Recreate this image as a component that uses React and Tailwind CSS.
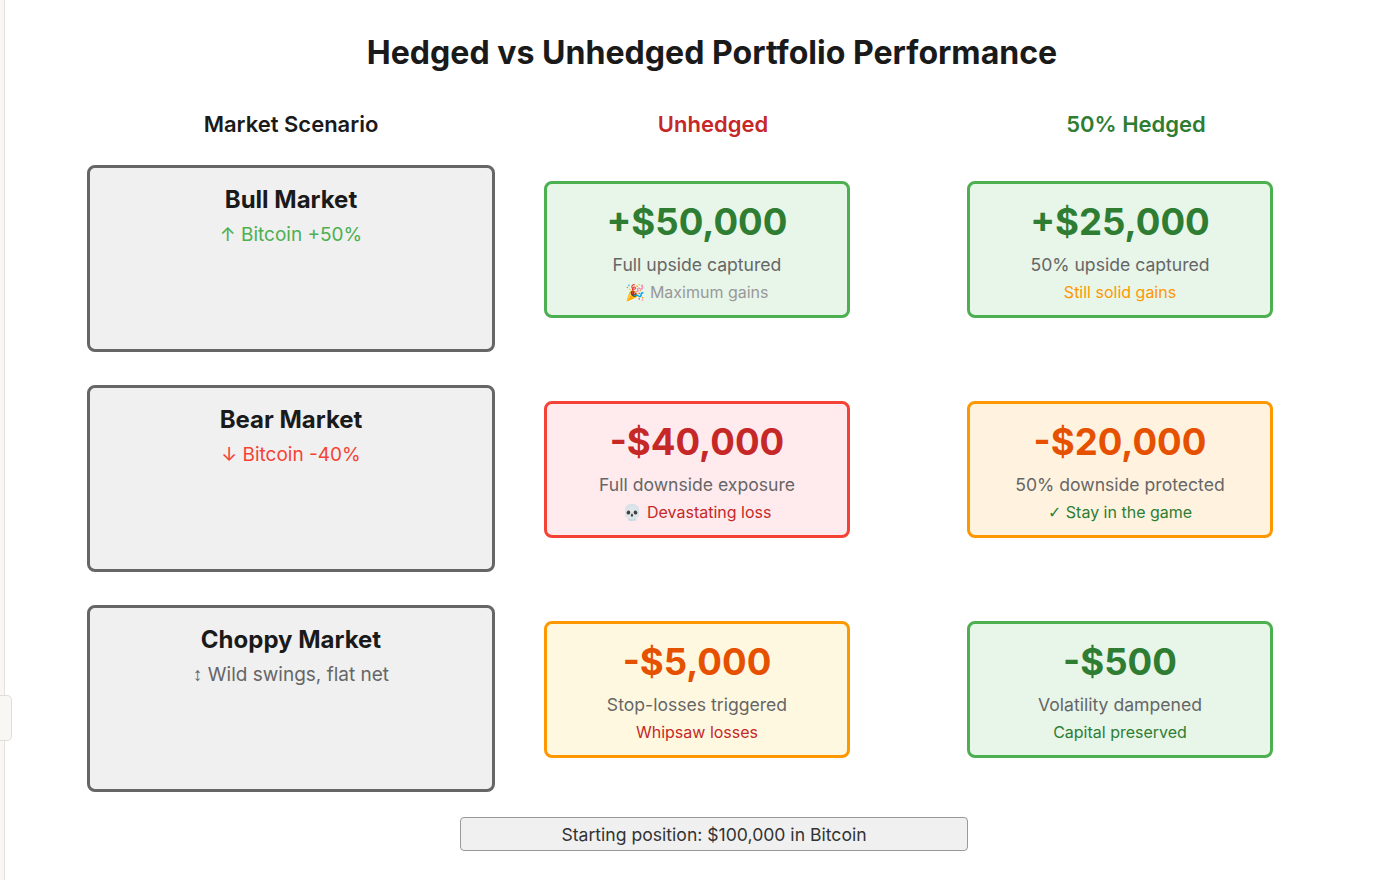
import React from "react";

const Glyph = ({ children, font }) => (
  <span style={{ fontFamily: `${font}, sans-serif` }}>{children}</span>
);

const scenarios = [
  {
    title: "Bull Market",
    move: "↑ Bitcoin +50%",
    moveColor: "text-[#4caf50]",
    unhedged: {
      box: "bg-[#e8f5e9] border-[#4caf50]",
      amount: "+$50,000",
      amountColor: "text-[#2e7d32]",
      line: "Full upside captured",
      note: "🎉 Maximum gains",
      noteColor: "text-[#999999]",
    },
    hedged: {
      box: "bg-[#e8f5e9] border-[#4caf50]",
      amount: "+$25,000",
      amountColor: "text-[#2e7d32]",
      line: "50% upside captured",
      note: "Still solid gains",
      noteColor: "text-[#ff9800]",
    },
  },
  {
    title: "Bear Market",
    move: "↓ Bitcoin -40%",
    moveColor: "text-[#f44336]",
    unhedged: {
      box: "bg-[#ffebee] border-[#f44336]",
      amount: "-$40,000",
      amountColor: "text-[#c62828]",
      line: "Full downside exposure",
      note: "💀 Devastating loss",
      noteColor: "text-[#c62828]",
    },
    hedged: {
      box: "bg-[#fff3e0] border-[#ff9800]",
      amount: "-$20,000",
      amountColor: "text-[#e65100]",
      line: "50% downside protected",
      note: (
        <>
          <Glyph font="'DejaVu Sans'">✓</Glyph> Stay in the game
        </>
      ),
      noteColor: "text-[#2e7d32]",
    },
  },
  {
    title: "Choppy Market",
    move: (
      <>
        <Glyph font="'Liberation Sans'">↕</Glyph> Wild swings, flat net
      </>
    ),
    moveColor: "text-[#666666]",
    unhedged: {
      box: "bg-[#fff8e1] border-[#ff9800]",
      amount: "-$5,000",
      amountColor: "text-[#e65100]",
      line: "Stop-losses triggered",
      note: "Whipsaw losses",
      noteColor: "text-[#c62828]",
    },
    hedged: {
      box: "bg-[#e8f5e9] border-[#4caf50]",
      amount: "-$500",
      amountColor: "text-[#2e7d32]",
      line: "Volatility dampened",
      note: "Capital preserved",
      noteColor: "text-[#2e7d32]",
    },
  },
];

const ResultCard = ({ r }) => (
  <div
    className={`w-[306px] h-[137px] mt-[16px] rounded-[8px] border-[3px] ${r.box} flex flex-col items-center pt-[16px]`}
  >
    <div className={`text-[36.6px] leading-[44px] font-bold ${r.amountColor}`}>{r.amount}</div>
    <div className="mt-[9px] text-[17.6px] leading-[24px] text-[#666666]">{r.line}</div>
    <div className={`mt-[4px] text-[16px] leading-[22px] ${r.noteColor}`}>{r.note}</div>
  </div>
);

export default function App() {
  return (
    <div
      className="relative w-[1382px] h-[880px] bg-white overflow-hidden text-[#1a1a1a]"
      style={{ fontFamily: "Inter, 'Noto Sans', 'Noto Color Emoji', sans-serif" }}
    >
      {/* left app strip */}
      <div className="absolute left-0 top-0 h-full w-[5px] bg-[#f8f7f4] border-r border-[#e4e2dc]" />
      <div className="absolute left-0 top-[695px] w-[12px] h-[46px] bg-[#f8f7f4] border border-l-0 border-[#e0ded8] rounded-r-[5px]" />

      <div className="pl-[87px] pt-[33px]">
        <h1 className="w-[1250px] text-center text-[32.1px] leading-[40px] font-bold">
          Hedged vs Unhedged Portfolio Performance
        </h1>

        <div className="flex mt-[37px] text-[22px] leading-[28px] font-semibold">
          <div className="w-[408px] text-center">Market Scenario</div>
          <div className="w-[306px] ml-[65px] text-center text-[#c62828]">Unhedged</div>
          <div className="w-[306px] ml-[117px] text-center text-[#2e7d32]">50% Hedged</div>
        </div>

        <div className="mt-[27px] flex flex-col gap-[33px]">
          {scenarios.map((s) => (
            <div key={s.title} className="flex items-start">
              <div className="w-[408px] h-[187px] rounded-[8px] border-[3px] border-[#666666] bg-[#f0f0f0] flex flex-col items-center pt-[17px]">
                <div className="text-[24px] leading-[30px] font-bold">{s.title}</div>
                <div className={`mt-[7px] text-[19px] leading-[26px] ${s.moveColor}`}>{s.move}</div>
              </div>
              <div className="ml-[49px]">
                <ResultCard r={s.unhedged} />
              </div>
              <div className="ml-[117px]">
                <ResultCard r={s.hedged} />
              </div>
            </div>
          ))}
        </div>

        <div className="mt-[25px] ml-[373px] w-[508px] h-[34px] rounded-[4px] border-[1.5px] border-[#999999] bg-[#f0f0f0] flex items-center justify-center pt-[3px] text-[17.6px] text-[#333333]">
          Starting position: $100,000 in Bitcoin
        </div>
      </div>
    </div>
  );
}
